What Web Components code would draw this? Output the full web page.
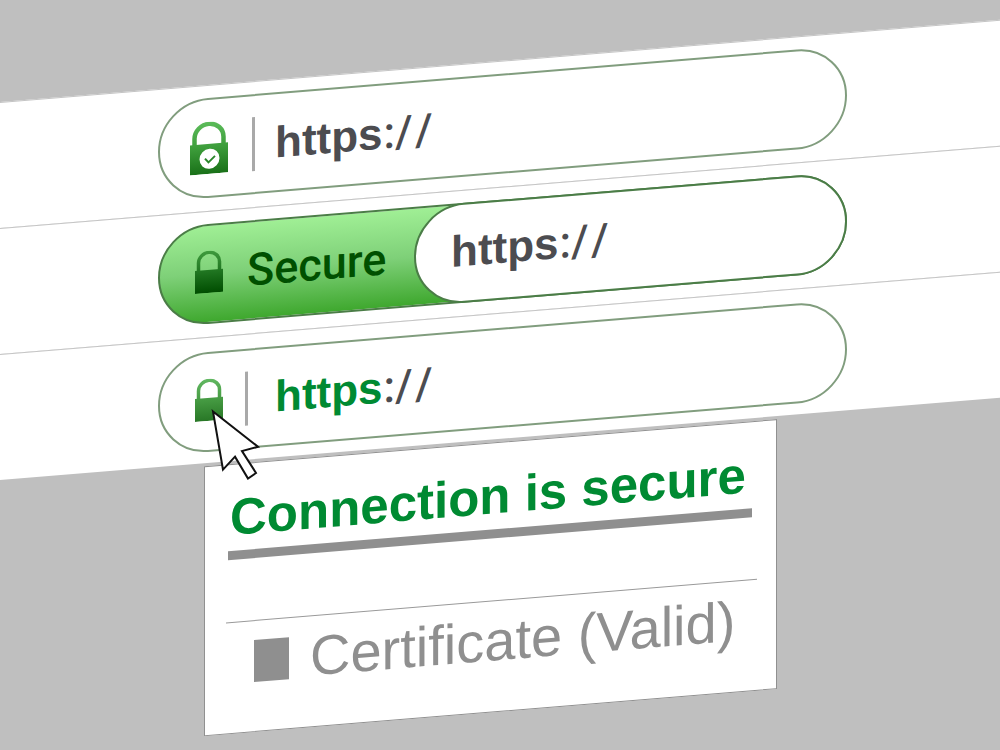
<!DOCTYPE html>
<html lang="en">
<head>
<meta charset="utf-8">
<title>Secure connection</title>
<style>
  html, body { margin: 0; background: #bfbfbf; }
</style>
</head>
<body>
<secure-page></secure-page>
<script>
  const define = (name, html) => {
    const template = document.createElement('template');
    template.innerHTML = html;
    customElements.define(name, class extends HTMLElement {
      constructor() {
        super();
        this.attachShadow({ mode: 'open' }).append(template.content.cloneNode(true));
      }
    });
  };

  // Padlock; the "checked" one is larger and carries a tick.
  define('pad-lock', `
    <style>
      :host { display: block; flex: none; margin-bottom: 4px; --top: #62b862; --mid: #459a42; --end: #287726; }
      :host([checked]) { margin-bottom: 0; --top: #5cbc5a; --mid: #3c9c3a; --end: #197018; }
      :host([dark]) { --top: #3f9b3d; --mid: #1f7420; --end: #004d00; }
      button { display: block; padding: 0; border: 0; background: none; }
      svg { display: block; }
      .large, :host([checked]) .small { display: none; }
      :host([checked]) .large { display: block; }
      .a { stop-color: var(--top); } .b { stop-color: var(--mid); } .c { stop-color: var(--end); }
    </style>
    <button type="button" aria-label="View site information">
      <svg class="small" width="28" height="42" viewBox="0 0 28 42">
        <defs><linearGradient id="g" x1="0" y1="0" x2="0" y2="42" gradientUnits="userSpaceOnUse">
          <stop class="a" offset="0"/><stop class="b" offset=".5"/><stop class="c" offset="1"/></linearGradient></defs>
        <path d="M3.500 21V11.500a10.500 10 0 0 1 21 0V21" fill="none" stroke="url(#g)" stroke-width="3.500"/>
        <rect y="19" width="28" height="23" fill="url(#g)"/>
      </svg>
      <svg class="large" width="38" height="52" viewBox="0 0 38 52">
        <defs><linearGradient id="h" x1="0" y1="0" x2="0" y2="52" gradientUnits="userSpaceOnUse">
          <stop class="a" offset="0"/><stop class="b" offset=".5"/><stop class="c" offset="1"/></linearGradient></defs>
        <path d="M4.500 24V16a14.500 14 0 0 1 29 0v8" fill="none" stroke="url(#h)" stroke-width="4.500"/>
        <rect y="22" width="38" height="30" fill="url(#h)"/>
        <circle cx="19.500" cy="37" r="10" fill="#fff"/>
        <path d="M15 36.500l3.500 4 6.500-6" fill="none" stroke="#2b862b" stroke-width="2"/>
      </svg>
    </button>`);

  define('url-text', `
    <style>
      :host { display: flex; font: bold 44px/96px "Liberation Sans", Arial, sans-serif; color: #4c4c50; white-space: nowrap; }
      :host([green]) .scheme { color: #008a32; }
      .rest { display: flex; gap: 3px; padding-left: 1px; font-family: Roboto, sans-serif; font-weight: 500; color: #4c4c50; }
      .rest span:first-child { margin-right: -3px; }
    </style><span class="scheme">https</span><span class="rest"><span>:</span><span>/</span><span>/</span></span>`);

  define('bar-rule', `
    <style>:host { display: block; flex: none; width: 3px; height: 54px; background: #a9a9a9; }</style>`);

  define('address-bar', `
    <style>
      :host { display: flex; align-items: center; position: relative; box-sizing: border-box; height: 100px;
        border: 2px solid #819d7e; border-radius: 50px; background: #fff; }
    </style><slot></slot>`);

  // Green capsule with a white address field laid over its right part.
  define('secure-bar', `
    <style>
      :host { display: flex; box-sizing: border-box; height: 100px; border: 2px solid #4b7d47; border-radius: 50px;
        background: linear-gradient(#a1f096, #7ed078 50%, #3ca62b) border-box; }
      .badge { display: flex; align-items: center; gap: 24px; box-sizing: border-box; flex: none; width: 256px; padding-left: 35px; }
      .label { font: 500 45px/96px Roboto, sans-serif; color: #005000; }
      .field { display: flex; align-items: center; flex: 1; box-sizing: border-box; margin: -2px; padding: 0 0 4px 35px;
        border: 2px solid #4b7d47; border-radius: 50px; background: #fff; }
    </style>
    <div class="badge"><pad-lock dark></pad-lock><span class="label"><slot></slot></span></div>
    <div class="field"><url-text></url-text></div>`);

  define('browser-strip', `
    <style>
      :host { display: block; box-sizing: border-box; height: 126px; padding: 12px 153px 0 158px;
        background: #fff; border-top: 1px solid #c4c4c4; }
    </style><slot></slot>`);

  define('site-popup', `
    <style>
      :host { display: block; box-sizing: border-box; height: 270px; padding: 21px 19px 0 21px;
        background: #fff; border: 1px solid #909090; }
      h2 { margin: 0 0 0 4px; font: bold 51px/64px "Liberation Sans", Arial, sans-serif; color: #008a32; white-space: nowrap; }
      .bar { height: 9px; margin: 1px 5px 0 2px; background: #8f8f8f; }
      .line { height: 1px; margin-top: 62px; background: #999; }
      button { display: flex; align-items: center; gap: 21px; margin: 8px 0 0 28px; padding: 0; border: 0; background: none;
        font: 56px/64px "Liberation Sans", Arial, sans-serif; color: #8f8f8f; white-space: nowrap; }
      i { flex: none; width: 35px; height: 42px; background: #8f8f8f; }
    </style>
    <h2><slot name="title"></slot></h2>
    <div class="bar"></div>
    <div class="line"></div>
    <button type="button"><i></i><span><slot name="item"></slot></span></button>`);

  define('mouse-pointer', `
    <style>:host { display: block; } svg { display: block; }</style>
    <svg width="56" height="80" viewBox="0 0 56 80">
      <path d="M5 5L50 44 34 47 48 70 40 75 27 52 15 64Z" fill="#fff" stroke="#111" stroke-width="2"/>
    </svg>`);

  define('secure-page', `
    <style>
      :host { display: block; box-sizing: border-box; min-height: 100vh; padding-top: 102px; overflow: clip; background: #bfbfbf; }
      .stage { transform: skewY(-4.7deg); transform-origin: 0 0; }
      .checked { padding-left: 30px; }
      .plain { padding-left: 35px; }
      .checked bar-rule { margin: 0 20px 0 24px; }
      .plain bar-rule { margin: 0 27px 0 22px; }
      .last { padding-top: 14px; position: relative; }
      site-popup { position: absolute; top: 128px; left: 204px; right: 223px; }
      mouse-pointer { position: absolute; z-index: 1; left: 48px; top: 53px; }
      address-bar { z-index: 1; }
    </style>
    <div class="stage">
      <browser-strip>
        <address-bar class="checked"><pad-lock checked></pad-lock><bar-rule></bar-rule><url-text></url-text></address-bar>
      </browser-strip>
      <browser-strip><secure-bar>Secure</secure-bar></browser-strip>
      <browser-strip class="last">
        <address-bar class="plain"><pad-lock></pad-lock><bar-rule></bar-rule><url-text green></url-text>
          <mouse-pointer></mouse-pointer></address-bar>
        <site-popup>
          <span slot="title">Connection is secure</span>
          <span slot="item">Certificate (Valid)</span>
        </site-popup>
      </browser-strip>
    </div>`);
</script>
</body>
</html>
